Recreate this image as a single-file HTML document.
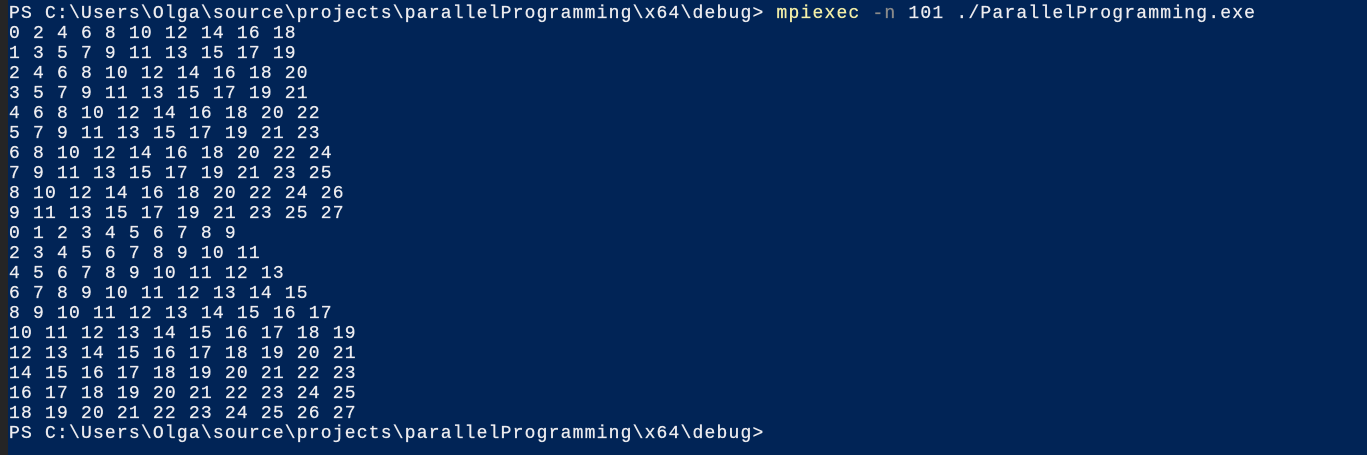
<!DOCTYPE html>
<html><head><meta charset="utf-8"><style>
html,body{margin:0;padding:0;width:1367px;height:455px;overflow:hidden;background:#012456;}
.strip{position:absolute;left:0;top:0;width:8px;height:455px;background:#252526;}
pre{position:absolute;left:9px;top:4px;margin:0;font-family:"Liberation Mono",monospace;font-size:18px;letter-spacing:1.19px;line-height:20px;color:#eeedf0;white-space:pre;-webkit-text-stroke:0.25px #eeedf0;}
.y{color:#f5f0a8;-webkit-text-stroke-color:#f5f0a8}.g{color:#8a8a8a;-webkit-text-stroke-color:#8a8a8a}
</style></head><body>
<div class="strip"></div>
<pre>PS C:\Users\Olga\source\projects\parallelProgramming\x64\debug&gt; <span class="y">mpiexec</span> <span class="g">-n</span> 101 ./ParallelProgramming.exe
0 2 4 6 8 10 12 14 16 18
1 3 5 7 9 11 13 15 17 19
2 4 6 8 10 12 14 16 18 20
3 5 7 9 11 13 15 17 19 21
4 6 8 10 12 14 16 18 20 22
5 7 9 11 13 15 17 19 21 23
6 8 10 12 14 16 18 20 22 24
7 9 11 13 15 17 19 21 23 25
8 10 12 14 16 18 20 22 24 26
9 11 13 15 17 19 21 23 25 27
0 1 2 3 4 5 6 7 8 9
2 3 4 5 6 7 8 9 10 11
4 5 6 7 8 9 10 11 12 13
6 7 8 9 10 11 12 13 14 15
8 9 10 11 12 13 14 15 16 17
10 11 12 13 14 15 16 17 18 19
12 13 14 15 16 17 18 19 20 21
14 15 16 17 18 19 20 21 22 23
16 17 18 19 20 21 22 23 24 25
18 19 20 21 22 23 24 25 26 27
PS C:\Users\Olga\source\projects\parallelProgramming\x64\debug&gt;</pre>
</body></html>
